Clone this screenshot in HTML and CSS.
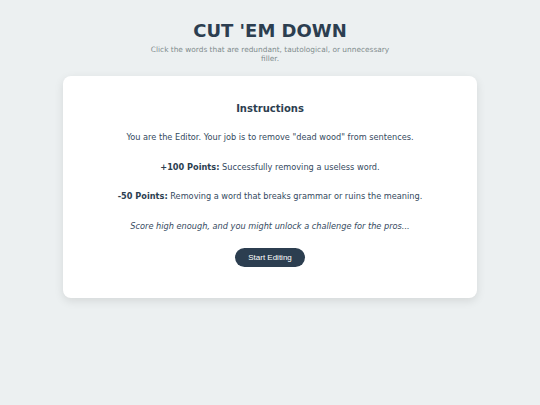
FILE: index.html
```html
<!DOCTYPE html>
<html lang="en">
<head>
  <meta charset="UTF-8" />
  <meta name="viewport" content="width=device-width, initial-scale=1" />
  <title>Cut 'Em Down</title>
  <link rel="stylesheet" href="styles.css">
</head>
<body>
  <header class="top">
    <h1>CUT 'EM DOWN</h1>
    <p class="subtitle">Click the words that are redundant, tautological, or unnecessary filler.</p>
  </header>

  <div class="card">
    <h2>Instructions</h2>
    <p>You are the Editor. Your job is to remove "dead wood" from sentences.</p>
    <p><strong>+100 Points:</strong> Successfully removing a useless word.</p>
    <p><strong>-50 Points:</strong> Removing a word that breaks grammar or ruins the meaning.</p>
    <p class="hint">Score high enough, and you might unlock a challenge for the pros...</p>
    <button class="start-btn">Start Editing</button>
  </div>
</body>
</html>
```

FILE: styles.css
```css
body {
  margin: 0;
  padding: 20px 0;
  background: #ecf0f1;
  color: #2c3e50;
  font-family: Verdana, "DejaVu Sans", sans-serif;
}

.top {
  text-align: center;
}

h1 {
  margin: 0;
  font-size: 18px;
  line-height: 22px;
}

.subtitle {
  max-width: 250px;
  margin: 3px auto 0;
  font-size: 7.4px;
  line-height: 9px;
  color: #7f8c8d;
}

.card {
  width: 414px;
  box-sizing: border-box;
  margin: 13px auto 0;
  padding: 26px 30px 31px;
  background: #fff;
  border-radius: 8px;
  box-shadow: 0 3px 10px rgba(0, 0, 0, 0.1);
  text-align: center;
}

h2 {
  margin: 0 0 15px;
  font-size: 10px;
  line-height: 14px;
}

.card p {
  margin: 0 0 17.5px;
  font-size: 8.2px;
  line-height: 12px;
  color: #34495e;
}

.card p strong {
  color: #2c3e50;
}

.card p.hint {
  font-style: italic;
  margin-bottom: 16px;
}

.start-btn {
  display: block;
  height: 19px;
  margin: 0 auto;
  padding: 0 13px;
  border: none;
  border-radius: 10px;
  background: #2c3e50;
  color: #fff;
  font-family: "Liberation Sans", Arial, sans-serif;
  font-size: 8px;
  cursor: pointer;
}
```
